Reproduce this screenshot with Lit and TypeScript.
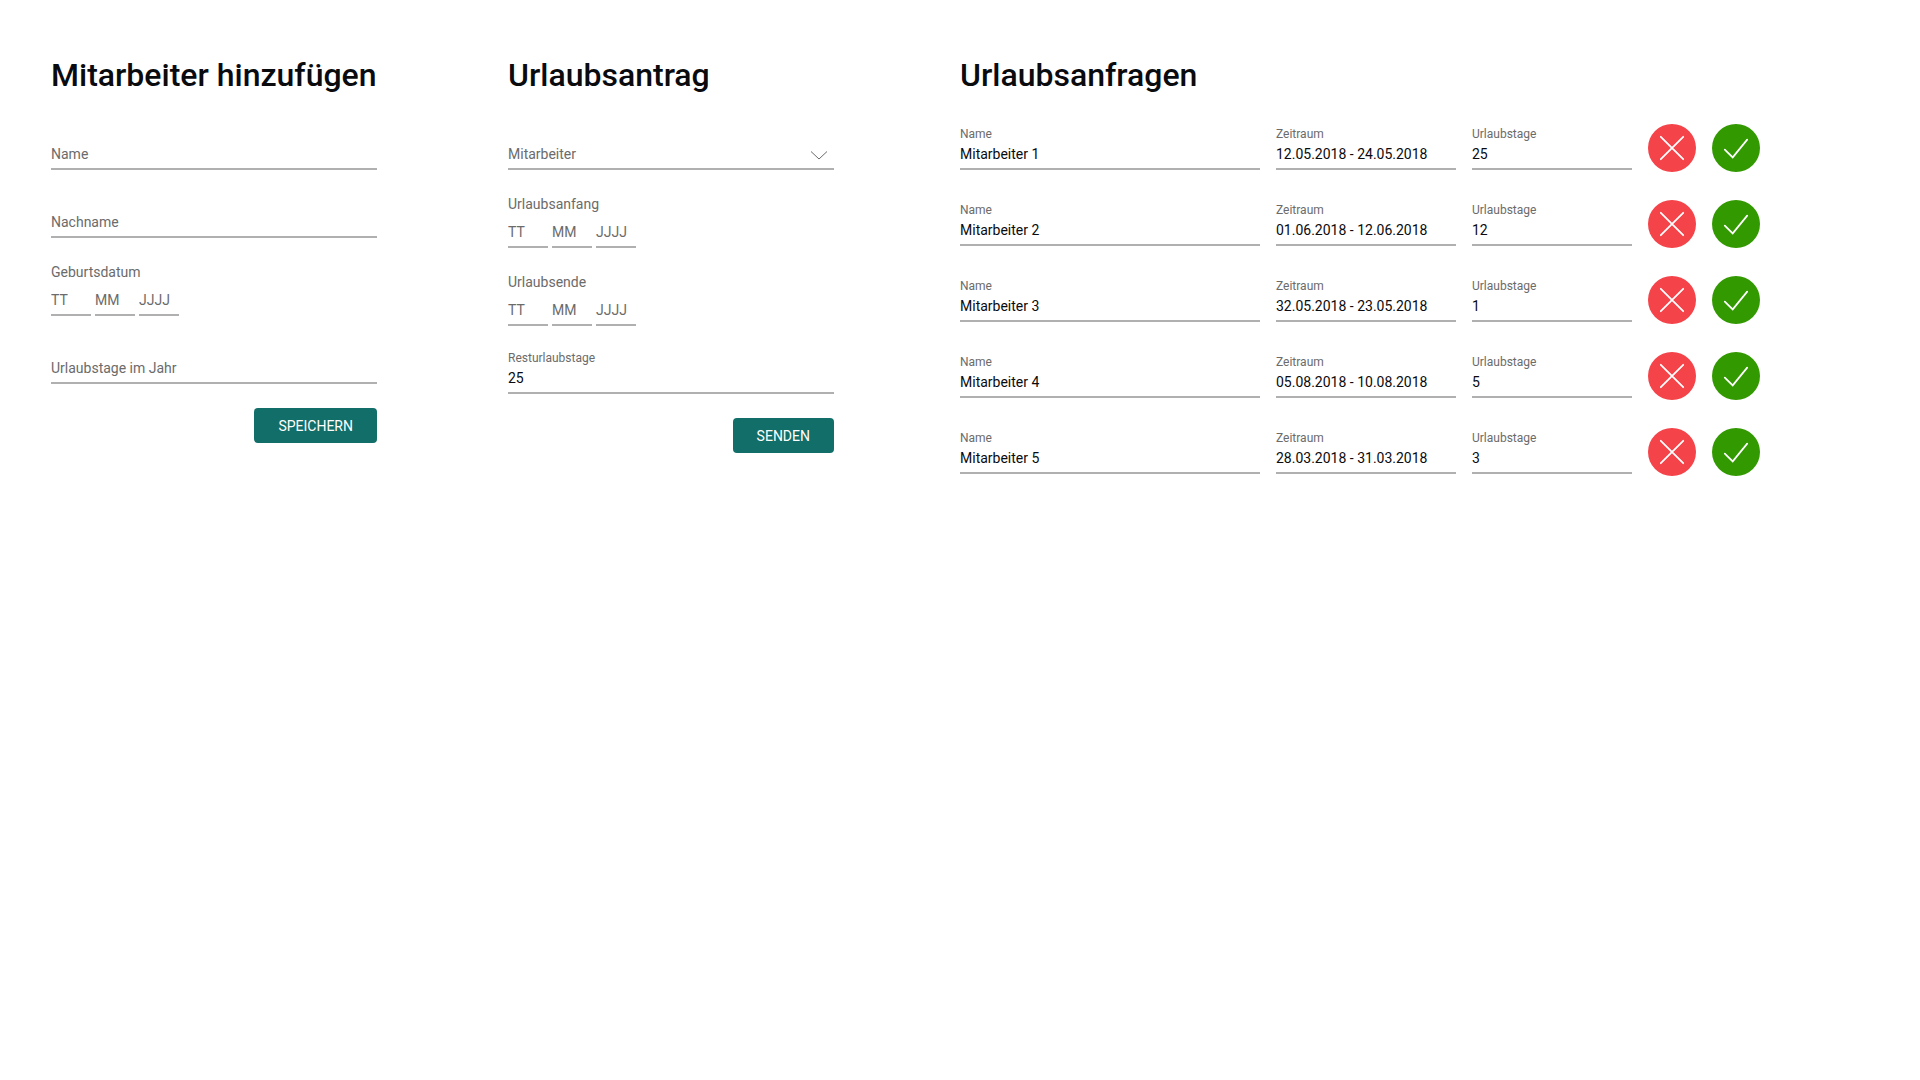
import { LitElement, html, css } from "lit";
import { customElement, state } from "lit/decorators.js";

interface VacationRequest {
  name: string;
  period: string;
  days: string;
}

const REQUESTS: VacationRequest[] = [
  { name: "Mitarbeiter 1", period: "12.05.2018 - 24.05.2018", days: "25" },
  { name: "Mitarbeiter 2", period: "01.06.2018 - 12.06.2018", days: "12" },
  { name: "Mitarbeiter 3", period: "32.05.2018 - 23.05.2018", days: "1" },
  { name: "Mitarbeiter 4", period: "05.08.2018 - 10.08.2018", days: "5" },
  { name: "Mitarbeiter 5", period: "28.03.2018 - 31.03.2018", days: "3" },
];

@customElement("app-root")
export class AppRoot extends LitElement {
  static styles = css`
    :host {
      display: block;
      min-height: 100vh;
      background: #fff;
      color: #0a0b0e;
      font-family: Roboto, "Liberation Sans", sans-serif;
      font-size: 14px;
      --muted: #6b6b6b;
      --line: #b0b0b0;
      --accent: #116e69;
    }

    * {
      box-sizing: border-box;
    }

    .page {
      display: grid;
      grid-template-columns:
        minmax(0, 326fr) minmax(0, 131fr) minmax(0, 326fr)
        minmax(0, 126fr) minmax(0, 800fr);
      align-items: start;
      padding: 56px 160px 56px 51px;
    }

    .add {
      grid-column: 1;
    }

    .apply {
      grid-column: 3;
    }

    .requests {
      grid-column: 5;
    }

    .title {
      margin: 0 0 30px;
      font-size: 32px;
      line-height: 38px;
      font-weight: 500;
      white-space: nowrap;
    }

    .form {
      display: flex;
      flex-direction: column;
      gap: 24px;
      padding-top: 2px;
    }

    .field {
      display: grid;
      grid-template-columns: minmax(0, 1fr);
      grid-template-rows: 16px 28px;
    }

    .label {
      grid-area: 1 / 1;
      color: var(--muted);
      font-size: 12px;
      line-height: 16px;
    }

    .resting {
      grid-area: 2 / 1;
      font-size: 14px;
      line-height: 24px;
      pointer-events: none;
    }

    .field:focus-within .resting {
      grid-area: 1 / 1;
      font-size: 12px;
      line-height: 16px;
    }

    .control {
      grid-area: 2 / 1;
      display: block;
      width: 100%;
      height: 28px;
      margin: 0;
      padding: 0 0 2px;
      border: 0;
      border-bottom: 2px solid var(--line);
      border-radius: 0;
      outline: 0;
      background: transparent;
      color: inherit;
      font: inherit;
      line-height: 24px;
      appearance: none;
    }

    .control:focus {
      border-bottom-color: var(--accent);
    }

    .control::placeholder {
      color: var(--muted);
      opacity: 1;
    }

    .select {
      color: var(--muted);
    }

    .chevron {
      grid-area: 2 / 1;
      justify-self: end;
      width: 18px;
      height: 10px;
      margin: 8px 6px 0 0;
      fill: none;
      stroke: var(--muted);
      pointer-events: none;
    }

    .date {
      display: flex;
      flex-direction: column;
      gap: 6px;
    }

    .date-label {
      color: var(--muted);
      line-height: 20px;
    }

    .date-parts {
      display: flex;
      gap: 4px;
    }

    .part {
      width: 40px;
    }

    .submit {
      align-self: flex-end;
      height: 35px;
      padding: 0 24px;
      border: 0;
      border-radius: 4px;
      background: var(--accent);
      color: #fff;
      font: inherit;
      cursor: pointer;
    }

    .rows {
      display: flex;
      flex-direction: column;
      gap: 28px;
      margin: 0;
      padding: 0;
      list-style: none;
    }

    .row {
      display: grid;
      grid-template-columns:
        minmax(0, 300fr) minmax(0, 180fr) minmax(0, 160fr) auto;
      align-items: center;
      gap: 16px;
    }

    .actions {
      display: flex;
      gap: 16px;
    }

    .action {
      width: 48px;
      height: 48px;
      padding: 0;
      border: 0;
      border-radius: 50%;
      cursor: pointer;
    }

    .reject {
      background: #f44349;
    }

    .accept {
      background: #339900;
    }

    .icon {
      display: block;
      width: 48px;
      height: 48px;
      fill: none;
      stroke: #fff;
      stroke-width: 1.75;
      stroke-linecap: round;
      stroke-linejoin: miter;
    }

    @media (max-width: 1500px) {
      .page {
        grid-template-columns: minmax(0, 1fr);
        gap: 48px;
        padding: 56px 51px;
      }

      .add,
      .apply,
      .requests {
        grid-column: 1;
      }
    }
  `;

  @state() private values: Record<string, string> = {};

  private emptyField(id: string, label: string) {
    const filled = Boolean(this.values[id]);
    return html`
      <div class="field">
        <label class="label ${filled ? "" : "resting"}" for=${id}>${label}</label>
        <input
          class="control"
          id=${id}
          type="text"
          @input=${(e: Event) => {
            const value = (e.target as HTMLInputElement).value;
            this.values = { ...this.values, [id]: value };
          }}
        />
      </div>
    `;
  }

  private filledField(id: string, label: string, value: string) {
    return html`
      <div class="field">
        <label class="label" for=${id}>${label}</label>
        <input class="control" id=${id} type="text" .value=${value} />
      </div>
    `;
  }

  private dateField(id: string, label: string) {
    return html`
      <div class="date" role="group" aria-labelledby="${id}-label">
        <span class="date-label" id="${id}-label">${label}</span>
        <div class="date-parts">
          ${["TT", "MM", "JJJJ"].map(
            (part) => html`
              <input
                class="control part"
                type="text"
                inputmode="numeric"
                maxlength=${part.length}
                placeholder=${part}
                aria-label="${label} ${part}"
              />
            `,
          )}
        </div>
      </div>
    `;
  }

  private requestRow(request: VacationRequest, index: number) {
    return html`
      <li class="row">
        ${this.filledField(`name-${index}`, "Name", request.name)}
        ${this.filledField(`zeitraum-${index}`, "Zeitraum", request.period)}
        ${this.filledField(`tage-${index}`, "Urlaubstage", request.days)}
        <div class="actions">
          <button class="action reject" type="button" aria-label="Ablehnen">
            <svg class="icon" viewBox="0 0 48 48" aria-hidden="true">
              <path d="M12.8 12.8 35.2 35.2M35.2 12.8 12.8 35.2" />
            </svg>
          </button>
          <button class="action accept" type="button" aria-label="Annehmen">
            <svg class="icon" viewBox="0 0 48 48" aria-hidden="true">
              <path d="M12.8 25.6 20.7 33.4 35.2 15.6" />
            </svg>
          </button>
        </div>
      </li>
    `;
  }

  render() {
    return html`
      <main class="page">
        <section class="add">
          <h1 class="title">Mitarbeiter hinzufügen</h1>
          <form class="form" @submit=${(e: Event) => e.preventDefault()}>
            ${this.emptyField("vorname", "Name")}
            ${this.emptyField("nachname", "Nachname")}
            ${this.dateField("geburtsdatum", "Geburtsdatum")}
            ${this.emptyField("jahrestage", "Urlaubstage im Jahr")}
            <button class="submit" type="submit">SPEICHERN</button>
          </form>
        </section>

        <section class="apply">
          <h1 class="title">Urlaubsantrag</h1>
          <form class="form" @submit=${(e: Event) => e.preventDefault()}>
            <div class="field">
              <select class="control select" aria-label="Mitarbeiter">
                <option value="" selected>Mitarbeiter</option>
                ${REQUESTS.map((r) => html`<option>${r.name}</option>`)}
              </select>
              <svg class="chevron" viewBox="0 0 18 10" aria-hidden="true">
                <path d="M1 1.5 9 9 17 1.5" />
              </svg>
            </div>
            ${this.dateField("urlaubsanfang", "Urlaubsanfang")}
            ${this.dateField("urlaubsende", "Urlaubsende")}
            ${this.filledField("resttage", "Resturlaubstage", "25")}
            <button class="submit" type="submit">SENDEN</button>
          </form>
        </section>

        <section class="requests">
          <h1 class="title">Urlaubsanfragen</h1>
          <ul class="rows">
            ${REQUESTS.map((r, i) => this.requestRow(r, i + 1))}
          </ul>
        </section>
      </main>
    `;
  }
}
